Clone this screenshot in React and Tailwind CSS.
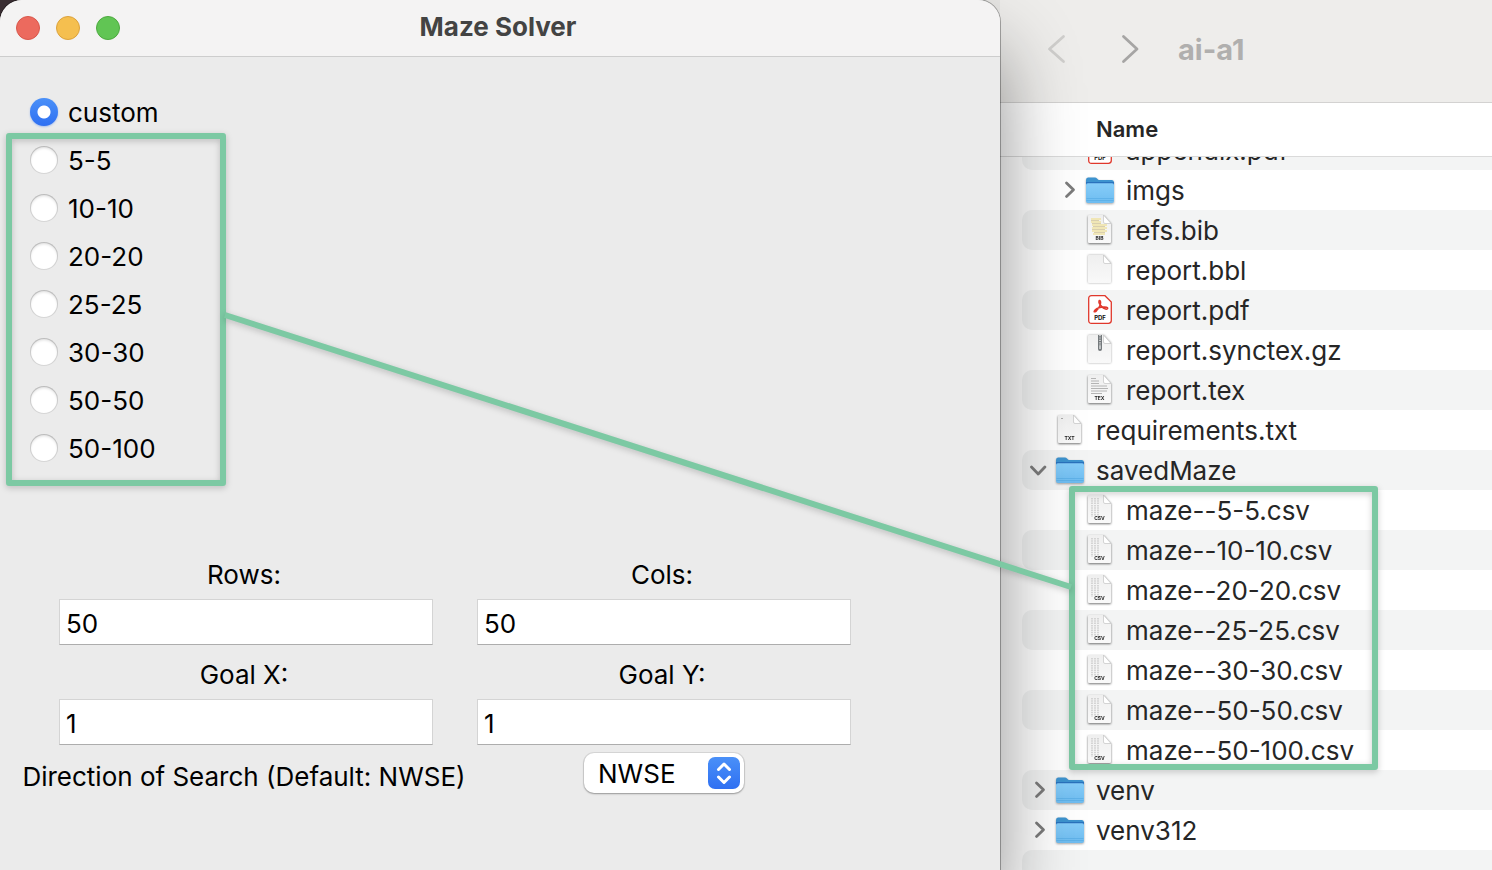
import { useState } from "react";

const presets = ["5-5", "10-10", "20-20", "25-25", "30-30", "50-50", "50-100"];

const files = [
  { name: "appendix.pdf", kind: "pdf", nested: true },
  { name: "imgs", kind: "folder", nested: true, toggle: "closed" },
  { name: "refs.bib", kind: "bib", nested: true },
  { name: "report.bbl", kind: "blank", nested: true },
  { name: "report.pdf", kind: "pdf", nested: true },
  { name: "report.synctex.gz", kind: "gz", nested: true },
  { name: "report.tex", kind: "tex", nested: true },
  { name: "requirements.txt", kind: "txt" },
  { name: "savedMaze", kind: "folder", toggle: "open" },
];

const mazes = presets.map((p) => ({ name: `maze--${p}.csv`, kind: "csv", nested: true }));

const rest = [
  { name: "venv", kind: "folder", toggle: "closed" },
  { name: "venv312", kind: "folder", toggle: "closed" },
];

function FolderIcon() {
  return (
    <svg viewBox="0 0 30 32" className="h-8 w-[30px] shrink-0 drop-shadow-[0_1px_1px_rgba(0,0,0,0.35)]" aria-hidden="true">
      <path d="M1 6Q1 3.500 3 3.500h7q1.200 0 2 .9l1 1q.6.6 1.600.6h12.400q2 0 2 2.500v8H1z" fill="#3d93cf" />
      <path d="M1 8h28v3H1z" fill="#2a72bd" />
      <path d="M1 11Q1 9.300 2.800 9.300h24.400q1.800 0 1.800 1.700v16q0 2-2 2H3q-2 0-2-2z" fill="url(#folderFill)" />
      <path d="M1.500 24.500h27M1.500 26.500h27" stroke="#5baee6" strokeWidth=".8" />
      <defs>
        <linearGradient id="folderFill" x1="0" y1="0" x2="0" y2="1">
          <stop offset="0" stopColor="#86cdf9" />
          <stop offset="1" stopColor="#6ebcf0" />
        </linearGradient>
      </defs>
    </svg>
  );
}

function PdfIcon() {
  return (
    <svg viewBox="0 0 30 32" className="h-8 w-[30px] shrink-0" aria-hidden="true">
      <path d="M6.500 1.700h13.500l6.300 6.300v18.500q0 2.800-2.800 2.800h-17q-2.800 0-2.800-2.800V4.500q0-2.800 2.800-2.800z" fill="#fff" stroke="#e0382c" strokeWidth="1.300" />
      <path
        d="M9.200 17.300c1-2.300 4.800-3.900 9-4.300 2.800-.2 4.700.2 4.500 1.400-.3 1.500-3.500.6-5.500-1.300-2-2-3.600-4.600-3.200-6 .4-1.200 1.600-.6 1.600 1.200 0 2.500-2.300 6.500-4 8.300-1.300 1.300-2.700 1.700-2.400.7z"
        fill="none" stroke="#e0382c" strokeWidth="1.500" strokeLinejoin="round"
      />
      <text x="15" y="26" textAnchor="middle" className="font-['Inter',sans-serif] text-[6px] font-bold" fill="#111">PDF</text>
    </svg>
  );
}

function PaperIcon({ kind }) {
  const label = { bib: "BIB", tex: "TEX", txt: "TXT", csv: "CSV" }[kind];
  const shadow = label
    ? "drop-shadow-[0_1px_1px_rgba(0,0,0,0.550)]"
    : "drop-shadow-[0_0_1px_rgba(0,0,0,0.350)]";
  return (
    <svg viewBox="0 0 30 32" className={`h-8 w-[30px] shrink-0 ${shadow}`} aria-hidden="true">
      <defs>
        <linearGradient id="paperFill" x1="0" y1="0" x2="0" y2="1">
          <stop offset="0" stopColor="#efefef" />
          <stop offset="1" stopColor="#f9f9f9" />
        </linearGradient>
      </defs>
      <path d="M4 1h14.500l7.500 8.500v18.500q0 1-1 1h-21q-1 0-1-1V2q0-1 1-1z" fill="url(#paperFill)" />
      {kind === "bib" && (
        <g strokeWidth="1.600">
          <path d="M6 5h10M6 8h10M7 11h15M7 14h15M7 17h15M8 20h12" stroke="#efe2a2" />
          <path d="M6 6.500h8M7 9.500h9M8 12.500h12M7 15.500h13M9 18.500h11" stroke="#d9cfae" strokeWidth="1" />
        </g>
      )}
      {kind === "tex" && (
        <path d="M6 4.500h5M6 7h8M6 9.500h8M6 12h16M6 14.500h17M6 17h16M6 19.500h11" stroke="#b4b4b4" strokeWidth="1" />
      )}
      {kind === "csv" && (
        <path d="M7 4v19M10 4v18M13 4v18" stroke="#d0d0d0" strokeWidth="1.700" strokeDasharray="1.500 .8" />
      )}
      {kind === "txt" && <path d="M6 4.500h2" stroke="#aaa" />}
      {kind === "gz" && (
        <g>
          <path d="M13 1h4v14q0 2-2 2t-2-2z" fill="#74797c" />
          <path d="M15 1v11" stroke="#dadcdd" strokeWidth="1.600" strokeDasharray="1.200 1.200" />
          <path d="M14.200 12h1.600v3h-1.600z" fill="#d5d7d8" />
        </g>
      )}
      <path d="M18.500 1v7q0 1.500 1.500 1.500h6z" fill="#fff" stroke="#c4c4c4" strokeWidth=".7" />
      {label && (
        <text x="14.500" y="26" textAnchor="middle" className="font-['Inter',sans-serif] text-[5px] font-bold" fill="#222">{label}</text>
      )}
    </svg>
  );
}

function FileIcon({ kind }) {
  if (kind === "folder") return <FolderIcon />;
  if (kind === "pdf") return <PdfIcon />;
  return <PaperIcon kind={kind} />;
}

function FileRow({ file }) {
  return (
    <li className={`flex h-10 items-center rounded-l-[10px] odd:bg-[#f3f4f4] ${file.nested ? "pl-[36px]" : "pl-[6px]"}`}>
      <FileLine file={file} />
    </li>
  );
}

function MazeRow({ file }) {
  return (
    <li className="flex h-10 items-center rounded-l-[10px] pl-[36px] even:bg-[#f3f4f4]">
      <FileLine file={file} />
    </li>
  );
}

function FileLine({ file }) {
  return (
    <>
      <span className="mr-[3px] flex w-6 shrink-0 justify-center">
        {file.toggle && (
          <button type="button" aria-label={`Toggle ${file.name}`} aria-expanded={file.toggle === "open"}>
            <svg viewBox="0 0 20 20" className="size-5" fill="none" stroke="#7c7c7c" strokeWidth="2.800" strokeLinecap="round" strokeLinejoin="round">
              <path d={file.toggle === "open" ? "M1.500 7l6.700 7 6.700-7" : "M6.500 3l7 6.700-7 6.700"} />
            </svg>
          </button>
        )}
      </span>
      <FileIcon kind={file.kind} />
      <span className="ml-[11px] pt-0.5 whitespace-nowrap">{file.name}</span>
    </>
  );
}

function PresetRadio({ value, selected, onSelect }) {
  return (
    <label className="flex h-12 w-fit items-center gap-2.5">
      <input
        type="radio"
        name="preset"
        value={value}
        checked={selected === value}
        onChange={() => onSelect(value)}
        className="size-7 appearance-none rounded-full bg-white shadow-[inset_0_0_0_1px_rgba(0,0,0,0.160),inset_0_2px_3px_rgba(0,0,0,0.140)] checked:bg-[radial-gradient(circle,#fff_0_6px,transparent_7px),linear-gradient(#4a90f8,#2f70f2)] checked:shadow-[0_1px_2px_rgba(40,110,240,0.350)]"
      />
      <span className="pt-0.5">{value}</span>
    </label>
  );
}

function Field({ id, label, initial }) {
  return (
    <div className="px-[22px]">
      <label htmlFor={id} className="flex h-[50px] items-center justify-center pt-0.5 pr-1">{label}</label>
      <input
        id={id}
        type="text"
        defaultValue={initial}
        className="mb-1 block h-[46px] w-full border border-[#d4d4d4] border-b-[#adadad] bg-white px-1.5 pt-0.5 outline-none"
      />
    </div>
  );
}

export default function App() {
  const [preset, setPreset] = useState("custom");
  return (
    <div className="grid min-h-screen grid-cols-[1000fr_492fr] overflow-hidden bg-[linear-gradient(90deg,#3b2f34_0_40px,#e6e5e3_40px)] font-['Inter','Liberation_Sans',sans-serif] text-[26px] leading-8 text-black">
      <main className="relative z-10 rounded-t-[22px] bg-[#ebebeb] shadow-[0_0_0_1px_rgba(0,0,0,0.300),0_50px_80px_rgba(0,0,0,0.450)]">
        <header className="grid h-[57px] grid-cols-[1fr_auto_1fr] items-center rounded-t-[22px] border-b border-[#cdcdcd] bg-[#f4f3f3]">
          <div className="flex gap-4 pl-4">
            <button type="button" aria-label="Close" className="size-6 rounded-full border border-[#d9574b] bg-[#ec6a5e]" />
            <button type="button" aria-label="Minimize" className="size-6 rounded-full border border-[#dca23c] bg-[#f5bf4f]" />
            <button type="button" aria-label="Zoom" className="size-6 rounded-full border border-[#4daa3f] bg-[#61c554]" />
          </div>
          <h1 className="pr-1 pb-0.5 font-bold text-[#434343]">Maze Solver</h1>
        </header>

        <form>
          <fieldset aria-label="Maze" className="px-[30px] pt-[31px]">
            <PresetRadio value="custom" selected={preset} onSelect={setPreset} />
            <div className="relative">
              {presets.map((p) => (
                <PresetRadio key={p} value={p} selected={preset} onSelect={setPreset} />
              ))}
              <div className="pointer-events-none absolute -top-[3px] -bottom-[14px] -left-6 w-[220px] rounded-[3px] border-6 border-[#7cc9a3] drop-shadow-[0_2px_3px_rgba(0,0,0,0.200)]" />
            </div>
          </fieldset>

          <div className="mt-[77px] grid grid-cols-2 pr-[127px] pl-[37px]">
            <Field id="rows" label="Rows:" initial="50" />
            <Field id="cols" label="Cols:" initial="50" />
            <Field id="goal-x" label="Goal X:" initial="1" />
            <Field id="goal-y" label="Goal Y:" initial="1" />
            <label htmlFor="direction" className="flex h-12 items-center justify-center pt-2 pr-1 whitespace-nowrap">
              Direction of Search (Default: NWSE)
            </label>
            <div className="flex items-center justify-center">
              <div className="relative w-40">
                <select
                  id="direction"
                  defaultValue="NWSE"
                  className="block h-10 w-full appearance-none rounded-[10px] bg-white pt-0.5 pl-[14px] shadow-[0_0_0_1px_rgba(0,0,0,0.080),0_1px_2px_rgba(0,0,0,0.300)] outline-none"
                >
                  <option>NWSE</option>
                </select>
                <svg viewBox="0 0 32 32" className="pointer-events-none absolute top-1 right-1 size-8" fill="none" aria-hidden="true">
                  <defs>
                    <linearGradient id="stepFill" x1="0" y1="0" x2="0" y2="1">
                      <stop offset="0" stopColor="#4a90f8" />
                      <stop offset="1" stopColor="#2f70f2" />
                    </linearGradient>
                  </defs>
                  <rect width="32" height="32" rx="7" fill="url(#stepFill)" />
                  <path d="M10.500 12.500 16 7l5.500 5.500M10.500 20 16 25.500 21.500 20" stroke="#fff" strokeWidth="3" strokeLinecap="round" strokeLinejoin="round" />
                </svg>
              </div>
            </div>
          </div>
        </form>

        <svg
          viewBox="0 0 846 272"
          preserveAspectRatio="none"
          className="pointer-events-none absolute top-[315px] -right-[71px] left-[225px] h-[272px] w-[calc(100%-154px)] overflow-visible drop-shadow-[0_2px_3px_rgba(0,0,0,0.200)]"
          aria-hidden="true"
        >
          <line x1="0" y1="0" x2="846" y2="272" stroke="#7cc9a3" strokeWidth="6" vectorEffect="non-scaling-stroke" />
        </svg>
      </main>

      <aside className="flex h-full min-w-0 flex-col bg-white text-[#262626]">
        <header className="flex h-[103px] shrink-0 items-center border-b border-[#d3d2d1] bg-[#eeedeb] pb-1 pl-11">
          <button type="button" aria-label="Back">
            <svg viewBox="0 0 28 32" className="h-8 w-7" fill="none" stroke="#cfcecc" strokeWidth="2.800" strokeLinecap="round" strokeLinejoin="round">
              <path d="M19.500 3.500 5.500 16l14 12.500" />
            </svg>
          </button>
          <button type="button" aria-label="Forward" className="ml-11">
            <svg viewBox="0 0 28 32" className="h-8 w-7" fill="none" stroke="#a6a5a4" strokeWidth="2.800" strokeLinecap="round" strokeLinejoin="round">
              <path d="M7.500 3.500 21 16 7.500 28.500" />
            </svg>
          </button>
          <h2 className="ml-[34px] pt-0.5 text-[29px] font-bold text-[#b0afae]">ai-a1</h2>
        </header>
        <div className="flex h-[54px] shrink-0 items-center border-b border-[#dadada] pb-0.5 pl-24 text-[22px] font-semibold">Name</div>
        <div className="h-0 min-h-[713px] grow overflow-hidden pl-[22px]">
          <ul className="-mt-[27px]">
            {files.map((f) => (
              <FileRow key={f.name} file={f} />
            ))}
          </ul>
          <div className="relative">
            <ul>
              {mazes.map((f) => (
                <MazeRow key={f.name} file={f} />
              ))}
            </ul>
            <div className="pointer-events-none absolute -top-1 bottom-0 left-[47px] w-[309px] rounded-[3px] border-6 border-[#7cc9a3] drop-shadow-[0_2px_3px_rgba(0,0,0,0.200)]" />
          </div>
          <ul>
            {rest.map((f) => (
              <FileRow key={f.name} file={f} />
            ))}
            <li className="h-10 rounded-l-[10px] bg-[#f3f4f4]" aria-hidden="true" />
          </ul>
        </div>
      </aside>
    </div>
  );
}
